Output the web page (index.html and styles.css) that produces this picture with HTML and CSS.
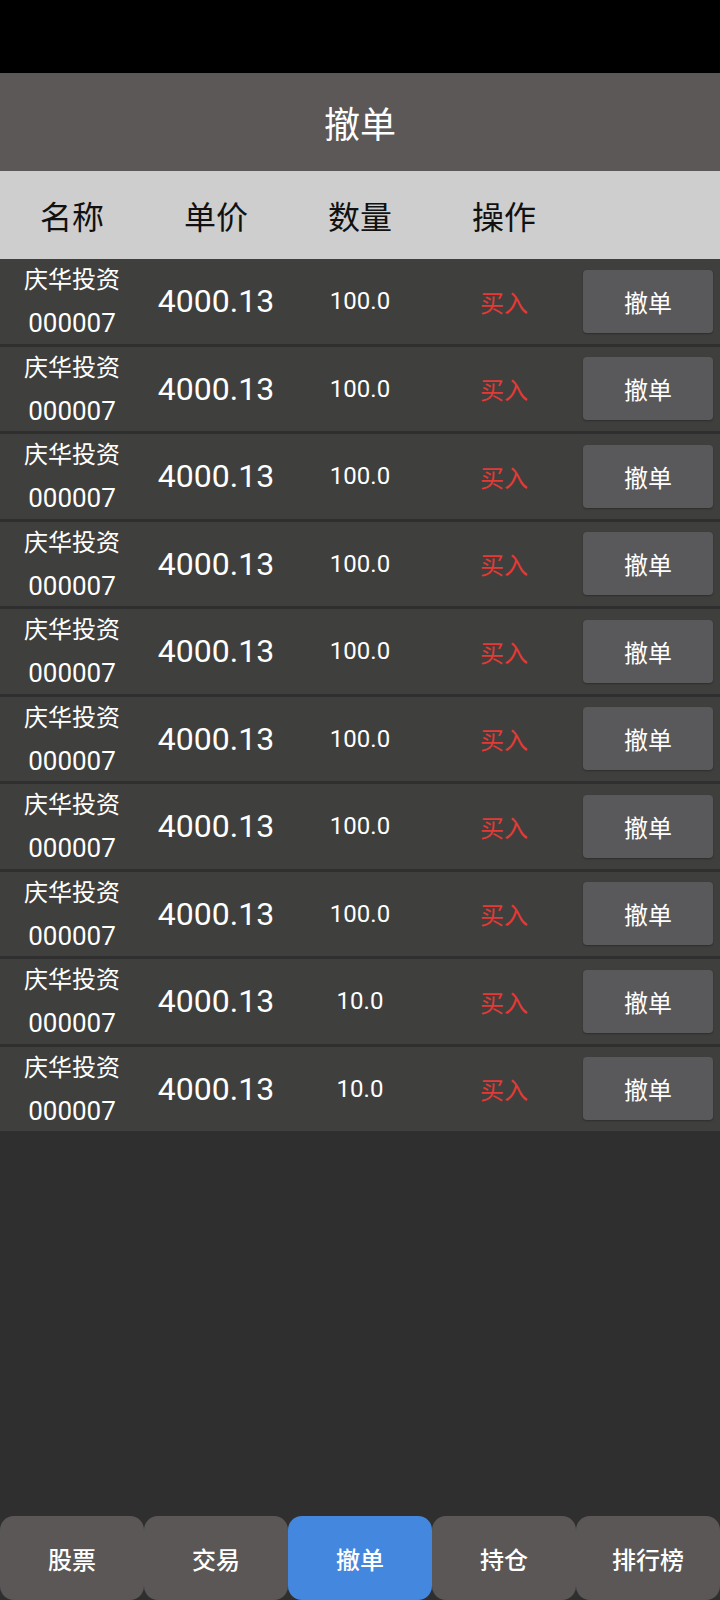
FILE: index.html
```html
<!DOCTYPE html>
<html lang="zh-CN">
<head>
    <meta charset="UTF-8">
    <meta name="viewport" content="width=device-width, initial-scale=1.0">
    <title>撤单</title>
    <link rel="stylesheet" href="styles.css">
</head>
<body>
    <div class="page">
        <div class="status-bar"></div>
        <div class="title-bar">撤单</div>

        <div class="list-head">
            <div>名称</div>
            <div>单价</div>
            <div>数量</div>
            <div>操作</div>
            <div></div>
        </div>

        <div class="list" id="order-list">
            <!-- 委托单由脚本生成 -->
        </div>

        <div class="tab-bar">
            <div class="tab">股票</div>
            <div class="tab">交易</div>
            <div class="tab active">撤单</div>
            <div class="tab">持仓</div>
            <div class="tab">排行榜</div>
        </div>
    </div>

    <script>
        const list = document.getElementById("order-list");

        const orders = [
            { nama: "庆华投资", kode: "000007", harga: "4000.13", jumlah: "100.0", aksi: "买入" },
            { nama: "庆华投资", kode: "000007", harga: "4000.13", jumlah: "100.0", aksi: "买入" },
            { nama: "庆华投资", kode: "000007", harga: "4000.13", jumlah: "100.0", aksi: "买入" },
            { nama: "庆华投资", kode: "000007", harga: "4000.13", jumlah: "100.0", aksi: "买入" },
            { nama: "庆华投资", kode: "000007", harga: "4000.13", jumlah: "100.0", aksi: "买入" },
            { nama: "庆华投资", kode: "000007", harga: "4000.13", jumlah: "100.0", aksi: "买入" },
            { nama: "庆华投资", kode: "000007", harga: "4000.13", jumlah: "100.0", aksi: "买入" },
            { nama: "庆华投资", kode: "000007", harga: "4000.13", jumlah: "100.0", aksi: "买入" },
            { nama: "庆华投资", kode: "000007", harga: "4000.13", jumlah: "10.0", aksi: "买入" },
            { nama: "庆华投资", kode: "000007", harga: "4000.13", jumlah: "10.0", aksi: "买入" }
        ];

        function renderList() {
            list.innerHTML = "";
            orders.forEach((order) => {
                const row = `
                    <div class="row">
                        <div class="name">
                            <span>${order.nama}</span>
                            <span class="code">${order.kode}</span>
                        </div>
                        <div class="price">${order.harga}</div>
                        <div class="qty">${order.jumlah}</div>
                        <div class="side">${order.aksi}</div>
                        <div class="cell-btn"><button class="cancel">撤单</button></div>
                    </div>
                `;
                list.innerHTML += row;
            });
        }

        renderList();
    </script>
</body>
</html>
```

FILE: styles.css
```css
body {
    margin: 0;
    background-color: #2f2f2f;
    font-family: Roboto, "Noto Sans CJK SC", sans-serif;
    color: #fff;
}
.page {
    display: flex;
    flex-direction: column;
    height: 100vh;
}
.status-bar {
    height: 73px;
    background-color: #000;
}
.title-bar {
    height: 98px;
    display: flex;
    align-items: center;
    justify-content: center;
    background-color: #5b5857;
    font-size: 36px;
    box-shadow: 0 1px 1px rgba(0, 0, 0, 0.25);
}
.list-head {
    height: 88px;
    display: grid;
    grid-template-columns: repeat(5, 1fr);
    align-items: center;
    text-align: center;
    background-color: #cecece;
    color: #111;
    font-size: 32px;
}
.list {
    flex: 1;
    display: flex;
    flex-direction: column;
    gap: 3px;
}
.row {
    height: 84.5px;
    display: grid;
    grid-template-columns: repeat(5, 1fr);
    align-items: center;
    text-align: center;
    background-color: #3f403e;
    font-size: 24px;
}
.name {
    display: flex;
    flex-direction: column;
}
.name span {
    height: 42px;
    line-height: 42px;
}
.name .code {
    font-size: 26px;
    line-height: 44px;
}
.price {
    font-size: 32px;
}
.side {
    color: #e53935;
}
.cell-btn {
    display: flex;
    justify-content: center;
}
.cancel {
    width: 130px;
    height: 63px;
    border: none;
    border-radius: 4px;
    background-color: #59595b;
    color: #fff;
    font-family: Roboto, "Noto Sans CJK SC", sans-serif;
    font-size: 24px;
    box-shadow: 0 1px 2px rgba(0, 0, 0, 0.3);
}
.tab-bar {
    display: flex;
}
.tab {
    flex: 1;
    height: 84px;
    display: flex;
    align-items: center;
    justify-content: center;
    border-radius: 14px;
    background-color: #5a5756;
    font-size: 24px;
    font-weight: 500;
}
.tab.active {
    background-color: #4487de;
}
```
